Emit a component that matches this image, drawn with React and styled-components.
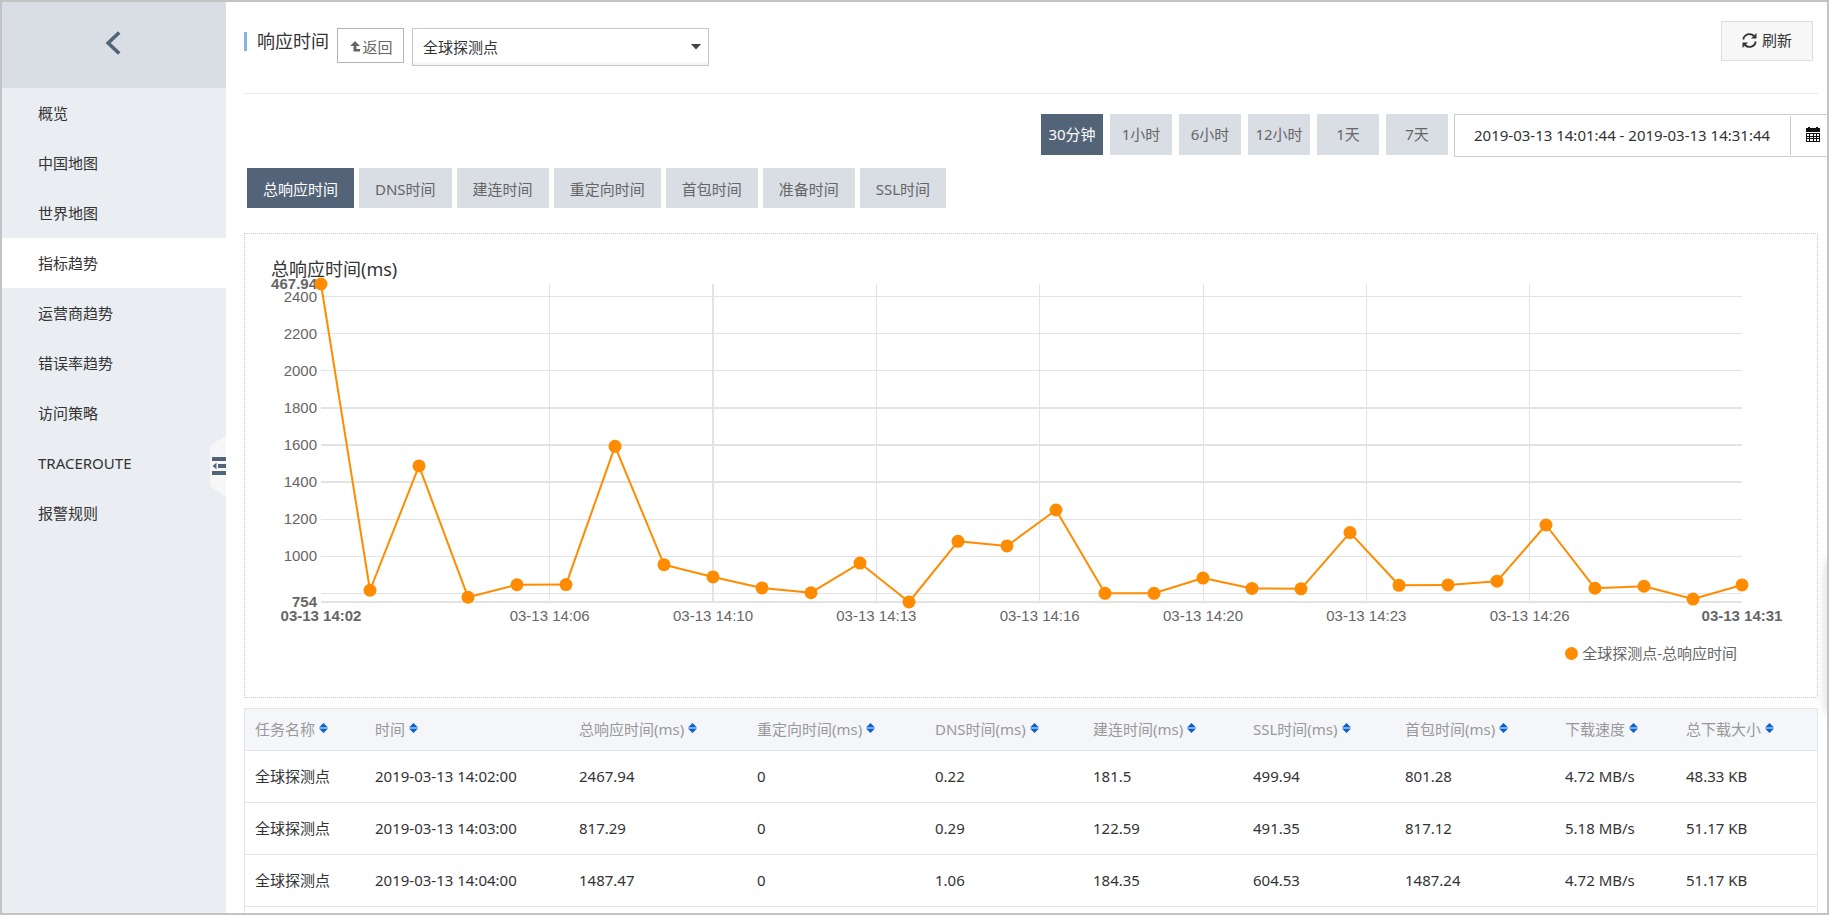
import React from 'react';
import styled, { createGlobalStyle } from 'styled-components';

const GlobalStyle = createGlobalStyle`
  *, *::before, *::after { box-sizing: border-box; }
  body {
    margin: 0;
    background: #fff;
    color: #333;
    font-family: "Noto Sans", "Noto Sans CJK SC", sans-serif;
    font-size: 15px;
    line-height: 20px;
  }
  button, input, select { font: inherit; color: inherit; }
`;

const Frame = styled.div`
  display: flex;
  height: 100vh;
  border: 2px solid #c3c3c3;
  overflow: hidden;
`;

const Sidebar = styled.aside`
  position: relative;
  flex: 0 0 224px;
  background: #eaedf1;
`;

const CollapseTop = styled.button`
  display: flex;
  align-items: center;
  justify-content: center;
  width: 100%;
  height: 86px;
  padding: 0 2px 4px 0;
  border: 0;
  background: #d9dde4;
`;

const NavLink = styled.a`
  display: flex;
  align-items: center;
  height: 50px;
  padding-left: 36px;
  color: #333;
  text-decoration: none;
  background: ${(p) => (p.$active ? '#fff' : 'transparent')};
`;

const FoldHandle = styled.button`
  position: absolute;
  right: 0;
  top: 433px;
  width: 16px;
  height: 62px;
  padding: 0;
  border: 0;
  background: none;
  svg { display: block; }
`;

const Main = styled.main`
  position: relative;
  flex: 1;
  min-width: 0;
  display: flex;
  flex-direction: column;
  padding-left: 18px;
`;

const Header = styled.header`
  display: flex;
  align-items: flex-start;
  height: 92px;
  margin-right: 9px;
  padding: 19px 5px 0 0;
  border-bottom: 1px solid #ebebeb;
`;

const Title = styled.h1`
  display: flex;
  align-items: center;
  gap: 10px;
  margin: 8px 8px 0 0;
  font-size: 18px;
  line-height: 24px;
  font-weight: 400;
  &::before {
    content: '';
    width: 3px;
    height: 19px;
    background: #85b6e0;
  }
`;

const BackButton = styled.button`
  display: flex;
  align-items: center;
  justify-content: center;
  gap: 1px;
  width: 67px;
  height: 35px;
  margin: 7px 8px 0 0;
  padding: 2px 0 0 2px;
  border: 1px solid #b5b5b5;
  background: #fff;
  color: #666;
`;

const SelectBox = styled.span`
  position: relative;
  margin-top: 7px;
  svg {
    position: absolute;
    right: 8px;
    top: 16px;
    pointer-events: none;
  }
`;

const Select = styled.select`
  display: block;
  appearance: none;
  width: 297px;
  height: 38px;
  padding: 0 28px 0 10px;
  border: 1px solid #c8c8c8;
  border-radius: 0;
  background: linear-gradient(#fff 90%, #efefef);
`;

const RefreshButton = styled.button`
  display: flex;
  align-items: center;
  justify-content: center;
  gap: 5px;
  width: 92px;
  height: 40px;
  margin-left: auto;
  padding: 0 0 2px;
  border: 1px solid #ddd;
  background: #f7f7f7;
`;

const RangeBar = styled.div`
  display: flex;
  justify-content: flex-end;
  gap: 6px;
  height: 43px;
  margin-top: 20px;
`;

const RangeGroup = styled.div`
  display: flex;
  gap: 7px;
`;

const FlatButton = styled.button`
  border: 0;
  background: ${(p) => (p.$active ? '#546478' : '#d9dde4')};
  color: ${(p) => (p.$active ? '#fff' : '#666')};
  white-space: nowrap;
`;

const RangeButton = styled(FlatButton)`
  width: 62px;
  height: 41px;
  padding: 0 0 2px;
`;

const DateBox = styled.div`
  display: flex;
  width: 373px;
  border: 1px solid #ccc;
  border-right: 0;
`;

const DateInput = styled.input`
  flex: 1;
  min-width: 0;
  padding: 0 0 2px 19px;
  border: 0;
  background: none;
`;

const CalendarButton = styled.button`
  display: flex;
  align-items: center;
  width: 37px;
  margin: 1px 0;
  padding: 0 0 2px 15px;
  border: 0;
  border-left: 1px solid #ccc;
  background: none;
  color: #111;
`;

const Tabs = styled.nav`
  display: flex;
  gap: 5px;
  margin: 11px 0 25px;
  padding-left: 3px;
`;

const TabButton = styled(FlatButton)`
  height: 40px;
  padding: 2px 16px 0;
`;

const ChartCard = styled.section`
  height: 465px;
  flex: none;
  margin: 0 9px 10px 0;
  padding: 23px 75px 0 26px;
  border: 1px dotted #c8c8c8;
`;

const ChartTitle = styled.h2`
  margin: 0;
  font-size: 18px;
  line-height: 24px;
  font-weight: 400;
`;

const Plot = styled.svg`
  display: block;
  width: calc(100% - 50px);
  height: 318px;
  margin: 3px 0 0 50px;
  overflow: visible;
  font-family: "Liberation Sans", sans-serif;
  font-size: 15px;
  fill: #666;
`;

const Legend = styled.div`
  display: flex;
  align-items: center;
  justify-content: flex-end;
  gap: 4px;
  margin: 41px 5px 0 0;
  color: #666;
  &::before {
    content: '';
    width: 13px;
    height: 13px;
    border-radius: 50%;
    background: #ff8c00;
  }
`;

const TableBox = styled.div`
  flex: 1;
  min-height: 0;
  margin-right: 9px;
  border: 1px solid #dfe5ea;
  border-bottom: 0;
  overflow: hidden;
`;

const Table = styled.table`
  width: 100%;
  table-layout: fixed;
  border-collapse: separate;
  border-spacing: 0;
`;

const HeadCell = styled.th`
  width: ${(p) => p.$width}px;
  height: 42px;
  padding: 0 0 2px 10px;
  border-bottom: 1px solid #dfe5ea;
  background: #f4f6fa;
  color: #999;
  font-weight: 400;
  text-align: left;
  white-space: nowrap;
`;

const SortButton = styled.button`
  display: flex;
  align-items: center;
  gap: 4px;
  padding: 0;
  border: 0;
  background: none;
  svg { margin-bottom: 2px; }
`;

const Cell = styled.td`
  height: 52px;
  padding: 0 0 2px 10px;
  border-bottom: 1px solid #dfe5ea;
  white-space: nowrap;
`;

const EdgeShadow = styled.div`
  position: absolute;
  right: -8px;
  top: 560px;
  width: 8px;
  height: 150px;
  box-shadow: 0 0 12px rgba(0, 0, 0, 0.2);
`;

const NAV = ['概览', '中国地图', '世界地图', '指标趋势', '运营商趋势', '错误率趋势', '访问策略', 'TRACEROUTE', '报警规则'];
const RANGES = ['30分钟', '1小时', '6小时', '12小时', '1天', '7天'];
const METRICS = ['总响应时间', 'DNS时间', '建连时间', '重定向时间', '首包时间', '准备时间', 'SSL时间'];

const COLUMNS = [
  ['任务名称', 120],
  ['时间', 204],
  ['总响应时间(ms)', 178],
  ['重定向时间(ms)', 178],
  ['DNS时间(ms)', 158],
  ['建连时间(ms)', 160],
  ['SSL时间(ms)', 152],
  ['首包时间(ms)', 160],
  ['下载速度', 121],
  ['总下载大小', 141],
];

const ROWS = [
  ['全球探测点', '2019-03-13 14:02:00', '2467.94', '0', '0.22', '181.5', '499.94', '801.28', '4.72 MB/s', '48.33 KB'],
  ['全球探测点', '2019-03-13 14:03:00', '817.29', '0', '0.29', '122.59', '491.35', '817.12', '5.18 MB/s', '51.17 KB'],
  ['全球探测点', '2019-03-13 14:04:00', '1487.47', '0', '1.06', '184.35', '604.53', '1487.24', '4.72 MB/s', '51.17 KB'],
];

const SERIES = [
  2467.94, 817.29, 1487.47, 780, 847, 848, 1593, 955, 889, 830,
  804, 964, 754, 1081, 1056, 1250, 801, 801, 883, 827,
  825, 1128, 844, 846, 866, 1169, 828, 839, 770, 846,
];
const MIN = 754;
const MAX = 2467.94;
const PLOT_HEIGHT = 318;
const LAST = SERIES.length - 1;

const yOf = (v) => ((MAX - v) / (MAX - MIN)) * PLOT_HEIGHT;
const xOf = (i) => `${(i / LAST) * 100}%`;

const Y_TICKS = [2400, 2200, 2000, 1800, 1600, 1400, 1200, 1000, 800];
const X_TICKS = ['14:06', '14:10', '14:13', '14:16', '14:20', '14:23', '14:26'].map((t, k) => ({
  label: `03-13 ${t}`,
  at: (14 + k * 10) / 3,
}));

function Chart() {
  return (
    <Plot role="img" aria-label="总响应时间(ms)">
      <g stroke="#e3e3e3" shapeRendering="crispEdges">
        {Y_TICKS.map((v) => (
          <line
            key={v}
            x1="0"
            x2="100%"
            y1={yOf(v)}
            y2={yOf(v)}
            strokeWidth={v >= 1400 && v <= 1800 ? 2 : 1}
          />
        ))}
        {X_TICKS.map((t, k) => (
          <line
            key={t.label}
            x1={xOf(t.at)}
            x2={xOf(t.at)}
            y1="0"
            y2={PLOT_HEIGHT}
            strokeWidth={k === 1 ? 2 : 1}
          />
        ))}
        <line x1="0" x2="100%" y1={PLOT_HEIGHT} y2={PLOT_HEIGHT} strokeWidth="2" />
      </g>
      <g textAnchor="end">
        {Y_TICKS.filter((v) => v > 800).map((v) => (
          <text key={v} x="-4" y={yOf(v) + 5}>{v}</text>
        ))}
        <text x="-4" y="5" fontWeight="700">467.94</text>
        <text x="-4" y={PLOT_HEIGHT + 5} fontWeight="700">754</text>
      </g>
      <g textAnchor="middle">
        <text x="0" y={PLOT_HEIGHT + 19} fontWeight="700">03-13 14:02</text>
        {X_TICKS.map((t) => (
          <text key={t.label} x={xOf(t.at)} y={PLOT_HEIGHT + 19}>{t.label}</text>
        ))}
        <text x="100%" y={PLOT_HEIGHT + 19} fontWeight="700">03-13 14:31</text>
      </g>
      <g stroke="#ff8c00" strokeWidth="2">
        {SERIES.slice(1).map((v, i) => (
          <line key={i} x1={xOf(i)} y1={yOf(SERIES[i])} x2={xOf(i + 1)} y2={yOf(v)} />
        ))}
      </g>
      <g fill="#ff8c00">
        {SERIES.map((v, i) => (
          <circle key={i} cx={xOf(i)} cy={yOf(v)} r="6.5" />
        ))}
      </g>
    </Plot>
  );
}

const SortIcon = () => (
  <svg width="9" height="10" viewBox="0 0 9 10" aria-hidden="true">
    <path d="M4.5 0 9 4.5H0zM0 5.500h9L4.5 10z" fill="#0a62c9" />
  </svg>
);

export default function App() {
  return (
    <>
      <GlobalStyle />
      <Frame>
        <Sidebar>
          <CollapseTop aria-label="返回上级">
            <svg width="16" height="24" viewBox="0 0 16 24" fill="none" stroke="#546478" strokeWidth="3.6" aria-hidden="true">
              <path d="M14.2 1.5 3.2 12l11 10.5" />
            </svg>
          </CollapseTop>
          <nav>
            {NAV.map((n) => (
              <NavLink key={n} href="#" $active={n === '指标趋势'}>{n}</NavLink>
            ))}
          </nav>
          <FoldHandle aria-label="收起菜单">
            <svg width="16" height="62" viewBox="0 0 16 62" aria-hidden="true">
              <path d="M16 0 0 11v40l16 11z" fill="#f7f7f7" />
              <path d="M2 22h14v4H2zM2 36h14v4H2zM8 29h8v4H8zM2.500 31l4-3.200v6.400z" fill="#546478" />
            </svg>
          </FoldHandle>
        </Sidebar>
        <Main>
          <Header>
            <Title>响应时间</Title>
            <BackButton>
              <svg width="11" height="11" viewBox="0 0 11 11" fill="#666" aria-hidden="true">
                <path d="M5 0 10 5H6.500v3H10v2.500H3.500V5H0z" />
              </svg>
              返回
            </BackButton>
            <SelectBox>
              <Select aria-label="探测点" defaultValue="all">
                <option value="all">全球探测点</option>
              </Select>
              <svg width="10" height="6" viewBox="0 0 10 6" aria-hidden="true">
                <path d="M0 0h10L5 5.500z" fill="#444" />
              </svg>
            </SelectBox>
            <RefreshButton>
              <svg width="15" height="15" viewBox="0 0 15 15" aria-hidden="true">
                <path d="M1.300 6.500A6.300 6.300 0 0 1 12 3M13.700 8.500A6.300 6.300 0 0 1 3 12" fill="none" stroke="#333" strokeWidth="1.800" />
                <path d="M14.500 0v5.500H9zM.5 15V9.500H6z" fill="#333" />
              </svg>
              刷新
            </RefreshButton>
          </Header>
          <RangeBar>
            <RangeGroup>
              {RANGES.map((r, i) => (
                <RangeButton key={r} $active={i === 0}>{r}</RangeButton>
              ))}
            </RangeGroup>
            <DateBox>
              <DateInput aria-label="时间范围" defaultValue="2019-03-13 14:01:44 - 2019-03-13 14:31:44" />
              <CalendarButton aria-label="选择日期">
                <svg width="14" height="15" viewBox="0 0 14 15" fill="currentColor" aria-hidden="true">
                  <path d="M2 0h2v1h6V0h2v1h2v4H0V1h2z" />
                  <path fillRule="evenodd" d="M0 6h14v9H0zM1 7v2h2V7zm3 0v2h3V7zm4 0v2h2V7zm3 0v2h2V7zM1 10v1h2v-1zm3 0v1h3v-1zm4 0v1h2v-1zm3 0v1h2v-1zM1 12v2h2v-2zm3 0v2h3v-2zm4 0v2h2v-2zm3 0v2h2v-2z" />
                </svg>
              </CalendarButton>
            </DateBox>
          </RangeBar>
          <Tabs>
            {METRICS.map((m, i) => (
              <TabButton key={m} $active={i === 0}>{m}</TabButton>
            ))}
          </Tabs>
          <ChartCard>
            <ChartTitle>总响应时间(ms)</ChartTitle>
            <Chart />
            <Legend>全球探测点-总响应时间</Legend>
          </ChartCard>
          <TableBox>
            <Table>
              <thead>
                <tr>
                  {COLUMNS.map(([label, width]) => (
                    <HeadCell key={label} $width={width} scope="col">
                      <SortButton>
                        {label}
                        <SortIcon />
                      </SortButton>
                    </HeadCell>
                  ))}
                </tr>
              </thead>
              <tbody>
                {ROWS.map((row) => (
                  <tr key={row[1]}>
                    {row.map((c, i) => (
                      <Cell key={i}>{c}</Cell>
                    ))}
                  </tr>
                ))}
              </tbody>
            </Table>
          </TableBox>
          <EdgeShadow />
        </Main>
      </Frame>
    </>
  );
}
